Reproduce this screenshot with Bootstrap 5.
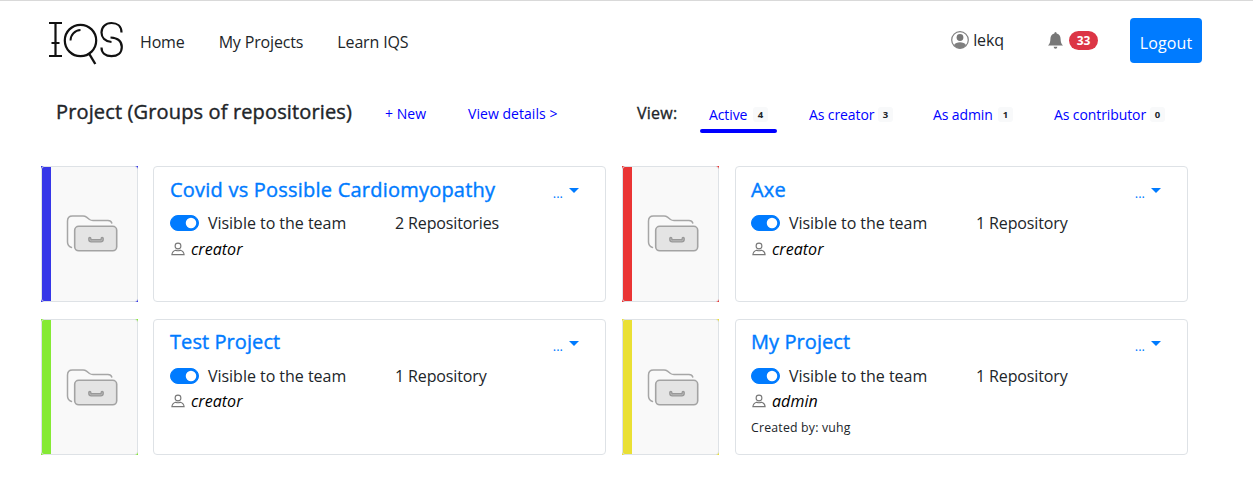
<!DOCTYPE html>
<html lang="en">
<head>
<meta charset="utf-8">
<meta name="viewport" content="width=device-width, initial-scale=1">
<title>IQS - My Projects</title>
<link href="https://cdn.jsdelivr.net/npm/bootstrap@5.3.0/dist/css/bootstrap.min.css" rel="stylesheet">
<style>
  body { font-family: "Open Sans", "Noto Sans", sans-serif; font-size: 16px; line-height: 24px; color: #212529; background: #fff; overflow: hidden; }
  a { text-decoration: none; }
  .topbar { height: 84px; padding: 0 51px 0 48px; border-top: 1px solid #d9d9d9; --bs-navbar-padding-y: 0; }
  .brand-link { margin-top: 18px; }
  .topbar .main-links { gap: 34px; margin: 29px 0 0 16px; }
  .main-links .nav-link { padding: 0; color: #212529; font-size: 16px; letter-spacing: -.15px; white-space: nowrap; }
  .account { font-size: 16px; letter-spacing: -.1px; }
  .user-box { margin: 27px 44px 0 0; }
  .alerts-box { margin: 26px 32px 0 0; height: 26px; gap: 6px; }
  .count-pill { width: 29px; height: 19px; padding: 0; font-size: 12px; line-height: 19px; background: #dc3545; color: #fff; }
  .btn-logout { width: 72px; height: 45px; margin-top: 17px; padding: 4px 0 0; border-radius: 4px; background: #007bff; color: #fff; letter-spacing: .1px; }
  .btn-logout:hover { background: #0069d9; color: #fff; }
  .subbar { height: 50px; padding-left: 56px; white-space: nowrap; }
  .page-title { width: 329px; padding-top: 16px; font-size: 20px; line-height: 24px; letter-spacing: .14px; -webkit-text-stroke: .4px currentColor; }
  .view-title { width: 63px; padding-top: 17px; font-size: 16px; letter-spacing: .25px; -webkit-text-stroke: .35px currentColor; }
  .sub-link { font-size: 14px; line-height: 20px; color: #00f; letter-spacing: .05px; }
  .plain-link { padding-top: 20px; }
  .tab-link { height: 37px; padding: 0 9px; margin-top: 14px; border-bottom: 4px solid transparent; letter-spacing: -.1px; }
  .tab-link.active { position: relative; margin-top: 12px; }
  .tab-link.active::after { content: ""; position: absolute; left: 0; right: 0; bottom: -4px; height: 4px; border-radius: 2px; background: #00f; }
  .tiny-count { width: 15px; height: 15px; padding: 0; font-size: 9.5px; line-height: 15px; background: #f8f9fa; color: #212529; border-radius: 3px; letter-spacing: 0; }
  .projects { display: grid; grid-template-columns: 565px 566px; column-gap: 16px; row-gap: 17px; padding: 32px 0 0 41px; }
  .project { height: 136px; gap: 15px; }
  .project.right-col { gap: 16px; }
  .thumb { width: 97px; flex: none; background: var(--tone); }
  .thumb-face { width: 100%; height: 100%; border: 1px solid #dee2e6; border-radius: 3px; background: linear-gradient(to right, var(--tone) 9px, #f9f9f9 9px); padding-left: 24px; padding-top: 48px; }
  .lower .thumb-face { padding-top: 49px; }
  .info { flex: 1; border: 1px solid #dee2e6; border-radius: 4px; padding: 10px 16px 0; }
  .right-col .info { padding-left: 15px; }
  .lower .info { padding-top: 9px; }
  .info-title { font-size: 20px; line-height: 26px; font-weight: 400; color: #007bff; letter-spacing: .22px; margin: 0; -webkit-text-stroke: .4px currentColor; }
  .lower .info-title { letter-spacing: .08px; }
  .more { margin-right: 10px; height: 26px; color: #007bff; font-size: 13px; gap: 6px; }
  .more span { padding-top: 5px; }
  .lower .more { padding-top: 2px; }
  .tri { width: 0; height: 0; margin-top: 1px; border: 5px solid transparent; border-top-color: #007bff; border-bottom: 0; }
  .vis-row { margin-top: 7px; height: 26px; letter-spacing: -.03px; }
  .lower .vis-row { margin-top: 8px; }
  .vis-label { width: 187px; }
  .repo-count { letter-spacing: -.12px; }
  .form-check-input.vis-switch { width: 29px; height: 16px; margin: 0 9px 1px 0; flex: none; border-radius: 8px; background-color: #007bff; border-color: #007bff; }
  .role { height: 26px; letter-spacing: .05px; color: #000; }
  .role svg { margin: 0 6px 1px 1px; }
  .lower .role { height: 24px; }
  .made-by { font-size: 12.3px; line-height: 18px; margin-top: 6px; letter-spacing: .2px; }
</style>
</head>
<body>
<svg width="0" height="0" class="position-absolute" aria-hidden="true">
  <symbol id="folders" viewBox="0 0 52 37">
    <path d="M5.500 32.500C3 31.500 1.500 29.500 1.500 27V6Q1.500 1 6.500 1H17Q19 1 20.500 2.200L23.500 4.500Q25 5.500 27 5.500H42Q45 5.700 45.800 8" fill="none" stroke="#a6a6a6" stroke-width="1.500" stroke-linecap="round"/>
    <rect x="8.700" y="11.300" width="42" height="24.500" rx="4" fill="#e4e4e4" stroke="#a3a3a3" stroke-width="1.600"/>
    <path d="M23.800 23.500V24.300Q23.800 25.800 25.300 25.800H34.700Q36.200 25.800 36.200 24.300V23.500" fill="none" stroke="#999" stroke-width="3.400" stroke-linecap="round"/>
    <path d="M23.800 23.500V24.500Q23.800 25.800 25.300 25.800H34.700Q36.200 25.800 36.200 24.500V23.500" fill="none" stroke="#bababa" stroke-width="1"/>
  </symbol>
  <symbol id="person" viewBox="0 0 14 14">
    <circle cx="7" cy="4" r="2.900" fill="none" stroke="#777" stroke-width="1.100"/>
    <path d="M4.600 8.200C2.500 8.800 1.100 10.300 .9 12.600H13.100C12.900 10.300 11.500 8.800 9.400 8.200Q7 9.300 4.600 8.200Z" fill="none" stroke="#777" stroke-width="1.100"/>
  </symbol>
</svg>

<nav class="navbar topbar d-flex flex-nowrap justify-content-start align-items-start">
  <a href="#" aria-label="IQS" class="brand-link d-block">
    <svg class="d-block" width="76" height="46" viewBox="0 0 76 46" fill="none" stroke="#111" stroke-width="2.200">
      <path d="M1 4H14M1 37H14M7.500 4V37M3.500 24H11.500"/>
      <circle cx="32.500" cy="21.500" r="15.700"/>
      <path d="M22.500 21.500A10.500 10.500 0 0 1 32.500 11" stroke-width="1.900"/>
      <path d="M41 34.500L47.300 45" stroke-width="2.400"/>
      <path d="M73.500 13.500C73.500 7 69 4 63.500 4C57.500 4 53.500 8 53.500 13.500C53.500 18.500 57 22.500 63.500 23M62.500 18.500C70 19 73.800 22.500 73.800 28C73.800 34 69.500 37.200 63.500 37.200C57.500 37.200 53.500 34 53.500 28.500"/>
    </svg>
  </a>
  <div class="main-links d-flex">
    <a class="nav-link" href="#">Home</a>
    <a class="nav-link" href="#">My Projects</a>
    <a class="nav-link" href="#">Learn IQS</a>
  </div>
  <div class="account ms-auto d-flex align-items-start">
    <div class="user-box d-flex align-items-center">
      <svg width="18" height="18" viewBox="0 0 18 18" class="me-1"><circle cx="9" cy="9" r="8.300" fill="none" stroke="#808080" stroke-width="1.200"/><circle cx="9" cy="6.500" r="3.400" fill="#777"/><path d="M2.900 14.200C4.200 12 6.200 11.200 9 11.200S13.800 12 15.100 14.200Q12.700 17.300 9 17.300T2.900 14.200Z" fill="#808080"/></svg>
      <span>lekq</span>
    </div>
    <div class="alerts-box d-flex align-items-center">
      <svg width="15" height="17" viewBox="0 0 15 17" fill="#777"><path d="M7.500 0Q8.700 0 8.700 1.500C11.500 2.100 12.500 4.200 12.600 7C12.700 10 13.200 12 15 13.600H0C1.800 12 2.300 10 2.400 7C2.500 4.200 3.500 2.100 6.300 1.500Q6.300 0 7.500 0ZM5.600 14.700H9.400Q9.200 16.800 7.500 16.800T5.600 14.700Z"/></svg>
      <span class="badge rounded-pill count-pill position-static">33</span>
    </div>
    <a href="#" class="btn btn-logout border-0 d-flex align-items-center justify-content-center">Logout</a>
  </div>
</nav>

<div class="subbar d-flex align-items-start">
  <div class="page-title">Project (Groups of repositories)</div>
  <a class="sub-link plain-link" href="#" style="width:83px">+ New</a>
  <a class="sub-link plain-link" href="#" style="width:169px">View details &gt;</a>
  <div class="view-title">View:</div>
  <a class="sub-link tab-link active d-flex align-items-center" href="#" style="width:77px"><span class="me-auto pt-1">Active</span><span class="badge tiny-count position-static mt-1">4</span></a>
  <a class="sub-link tab-link d-flex align-items-center" href="#" style="margin-left:23px;width:102px"><span class="me-auto">As creator</span><span class="badge tiny-count">3</span></a>
  <a class="sub-link tab-link d-flex align-items-center" href="#" style="margin-left:22px;width:98px"><span class="me-auto">As admin</span><span class="badge tiny-count">1</span></a>
  <a class="sub-link tab-link d-flex align-items-center" href="#" style="margin-left:23px;width:129px"><span class="me-auto">As contributor</span><span class="badge tiny-count">0</span></a>
</div>

<main class="projects">
  <section class="project d-flex" style="--tone:#3636e8">
    <div class="thumb"><div class="thumb-face"><svg class="d-block" width="52" height="37"><use href="#folders"/></svg></div></div>
    <div class="info">
      <div class="d-flex justify-content-between"><h2 class="info-title">Covid vs Possible Cardiomyopathy</h2><a href="#" class="more d-flex align-items-center"><span>...</span><i class="tri"></i></a></div>
      <div class="vis-row d-flex align-items-center form-switch p-0"><input class="form-check-input vis-switch" type="checkbox" role="switch" aria-label="Visible" checked><span class="vis-label">Visible to the team</span><span class="repo-count">2 Repositories</span></div>
      <div class="role d-flex align-items-center"><svg width="14" height="14"><use href="#person"/></svg><em>creator</em></div>
    </div>
  </section>
  <section class="project right-col d-flex" style="--tone:#ea3434">
    <div class="thumb"><div class="thumb-face"><svg class="d-block" width="52" height="37"><use href="#folders"/></svg></div></div>
    <div class="info">
      <div class="d-flex justify-content-between"><h2 class="info-title">Axe</h2><a href="#" class="more d-flex align-items-center"><span>...</span><i class="tri"></i></a></div>
      <div class="vis-row d-flex align-items-center form-switch p-0"><input class="form-check-input vis-switch" type="checkbox" role="switch" aria-label="Visible" checked><span class="vis-label">Visible to the team</span><span class="repo-count">1 Repository</span></div>
      <div class="role d-flex align-items-center"><svg width="14" height="14"><use href="#person"/></svg><em>creator</em></div>
    </div>
  </section>
  <section class="project lower d-flex" style="--tone:#85ea34">
    <div class="thumb"><div class="thumb-face"><svg class="d-block" width="52" height="37"><use href="#folders"/></svg></div></div>
    <div class="info">
      <div class="d-flex justify-content-between"><h2 class="info-title">Test Project</h2><a href="#" class="more d-flex align-items-center"><span>...</span><i class="tri"></i></a></div>
      <div class="vis-row d-flex align-items-center form-switch p-0"><input class="form-check-input vis-switch" type="checkbox" role="switch" aria-label="Visible" checked><span class="vis-label">Visible to the team</span><span class="repo-count">1 Repository</span></div>
      <div class="role d-flex align-items-center"><svg width="14" height="14"><use href="#person"/></svg><em>creator</em></div>
    </div>
  </section>
  <section class="project right-col lower d-flex" style="--tone:#eae034">
    <div class="thumb"><div class="thumb-face"><svg class="d-block" width="52" height="37"><use href="#folders"/></svg></div></div>
    <div class="info">
      <div class="d-flex justify-content-between"><h2 class="info-title">My Project</h2><a href="#" class="more d-flex align-items-center"><span>...</span><i class="tri"></i></a></div>
      <div class="vis-row d-flex align-items-center form-switch p-0"><input class="form-check-input vis-switch" type="checkbox" role="switch" aria-label="Visible" checked><span class="vis-label">Visible to the team</span><span class="repo-count">1 Repository</span></div>
      <div class="role d-flex align-items-center"><svg width="14" height="14"><use href="#person"/></svg><em>admin</em></div>
      <div class="made-by">Created by: vuhg</div>
    </div>
  </section>
</main>
<script src="https://cdn.jsdelivr.net/npm/bootstrap@5.3.0/dist/js/bootstrap.bundle.min.js"></script>
</body>
</html>
